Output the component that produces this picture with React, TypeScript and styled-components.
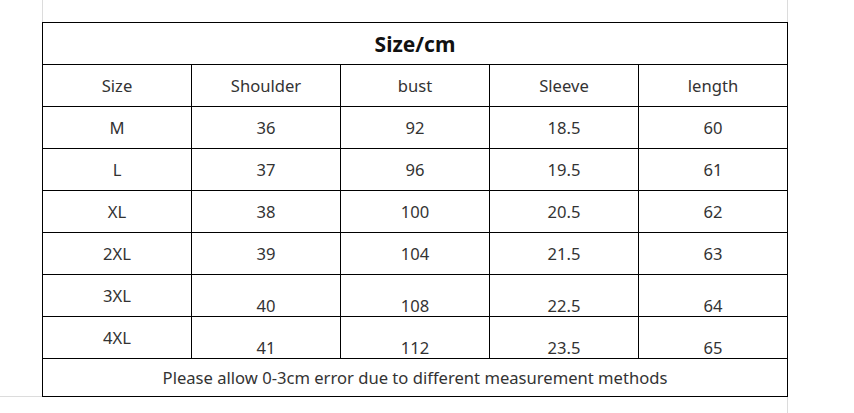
import React from "react";
import styled, { createGlobalStyle } from "styled-components";

const Global = createGlobalStyle`
  html, body { margin: 0; padding: 0; background: #fff; }
  body { font-family: "Noto Sans", "Open Sans", sans-serif; }
`;

const Page = styled.div`
  position: relative;
  width: 854px;
  height: 413px;
  padding: 22px 0 0 42px;
  box-sizing: border-box;
`;

const Frame = styled.div`
  position: absolute;
  background: #dcdcdc;
`;

const Table = styled.table`
  border-collapse: collapse;
  table-layout: fixed;
  width: 746px;
  color: #333;
  font-size: 16.6px;
`;

const Row = styled.tr<{ $h?: number }>`
  height: ${(p) => p.$h ?? 42}px;
`;

const Title = styled.th`
  padding: 0;
  border: 1px solid #000;
  font-size: 21px;
  font-weight: 700;
  color: #111;
  text-align: center;
`;

const Cell = styled.td<{ $low?: boolean }>`
  padding: ${(p) => (p.$low ? "20px 0 0" : "0")};
  border: 1px solid #000;
  text-align: center;
  vertical-align: middle;
  line-height: 20px;
`;

const headers = ["Size", "Shoulder", "bust", "Sleeve", "length"];
const rows: [string, number, number, number, number, boolean][] = [
  ["M", 36, 92, 18.5, 60, false],
  ["L", 37, 96, 19.5, 61, false],
  ["XL", 38, 100, 20.5, 62, false],
  ["2XL", 39, 104, 21.5, 63, false],
  ["3XL", 40, 108, 22.5, 64, true],
  ["4XL", 41, 112, 23.5, 65, true],
];

export default function App() {
  return (
    <Page>
      <Global />
      <Frame style={{ left: 42, top: 0, width: 1, height: 22 }} />
      <Frame style={{ left: 787, top: 0, width: 1, height: 22 }} />
      <Frame style={{ left: 787, top: 397, width: 1, height: 16 }} />
      <Frame style={{ left: 0, top: 396, width: 42, height: 1 }} />
      <Table>
        <thead>
          <Row>
            <Title colSpan={5}>Size/cm</Title>
          </Row>
        </thead>
        <tbody>
          <Row>
            {headers.map((h) => (
              <Cell key={h}>{h}</Cell>
            ))}
          </Row>
          {rows.map(([s, a, b, c, d, low]) => (
            <Row key={s}>
              <Cell>{s}</Cell>
              <Cell $low={low}>{a}</Cell>
              <Cell $low={low}>{b}</Cell>
              <Cell $low={low}>{c}</Cell>
              <Cell $low={low}>{d}</Cell>
            </Row>
          ))}
          <Row $h={38}>
            <Cell colSpan={5}>
              Please allow 0-3cm error due to different measurement methods
            </Cell>
          </Row>
        </tbody>
      </Table>
    </Page>
  );
}
